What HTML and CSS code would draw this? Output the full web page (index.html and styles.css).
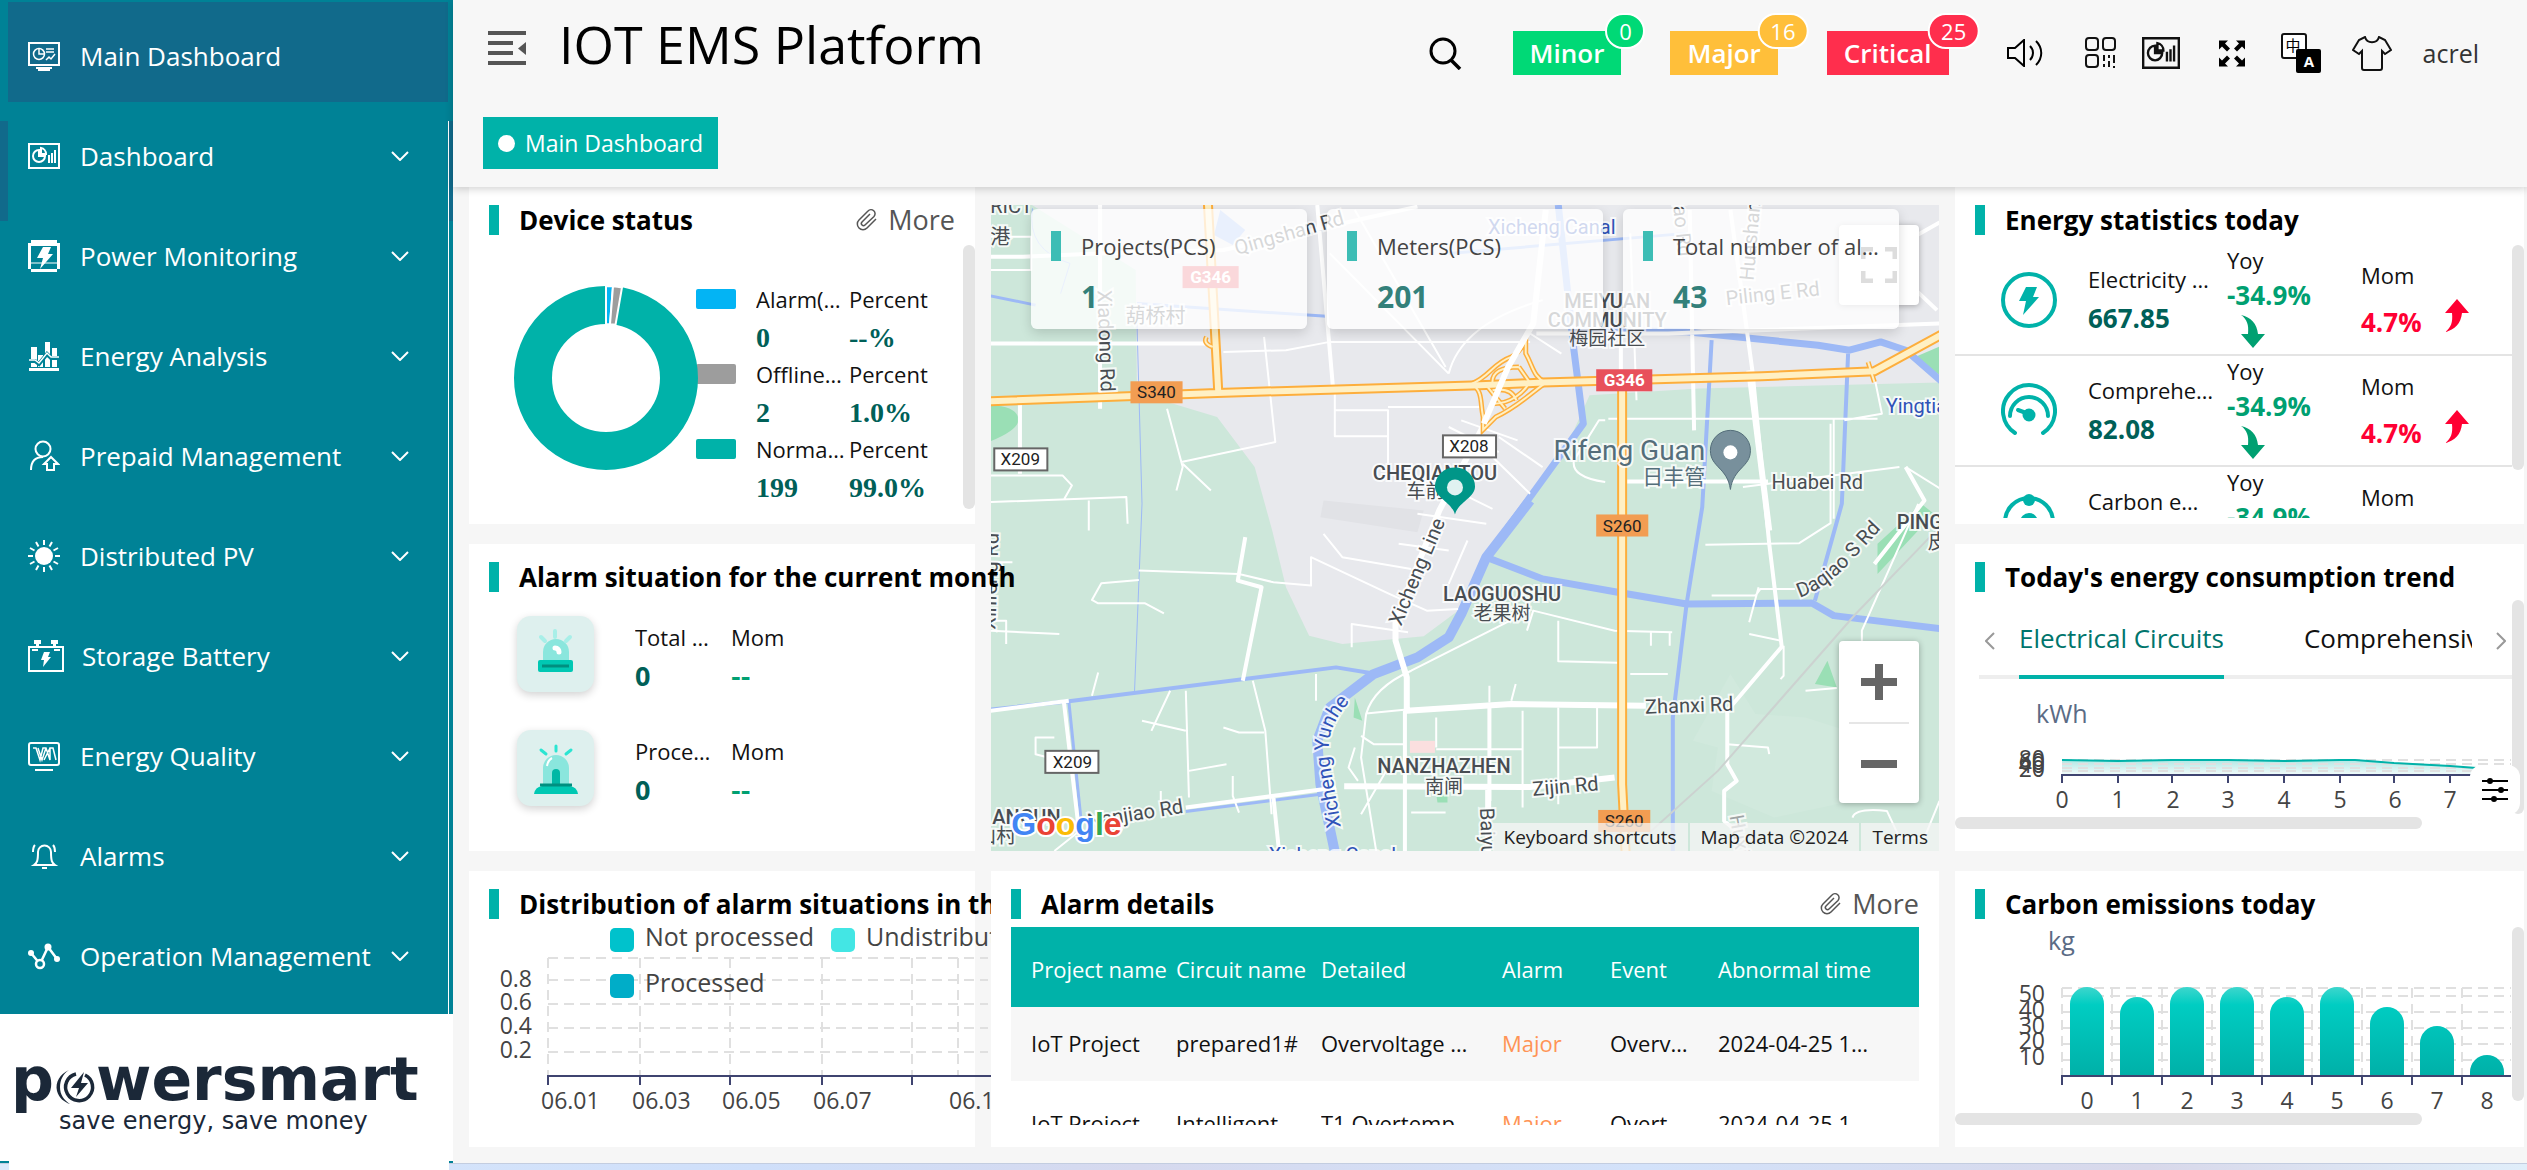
FILE: index.html
```html
<!DOCTYPE html>
<html lang="en">
<head>
<meta charset="utf-8">
<title>IOT EMS Platform</title>
<link rel="stylesheet" href="styles.css">
</head>
<body>
<svg class="defs" aria-hidden="true">
  <defs>
    <symbol id="chev" viewBox="0 0 18 10"><path d="M1 1l8 8 8-8" fill="none" stroke="currentColor" stroke-width="2"/></symbol>
    <symbol id="board" viewBox="0 0 32 26"><path d="M1 1h30v24H1z" fill="none" stroke="currentColor" stroke-width="2"/><path d="M11 7a6 6 0 1 0 6 6h-6zM13 5v6h5a6 6 0 0 0-5-6zM21 12v8M24 10v10M27 7v13" fill="none" stroke="currentColor" stroke-width="2"/></symbol>
    <symbol id="clip" viewBox="0 0 24 24"><path d="M21 11l-9 9a5.500 5.500 0 0 1-8-8L13 3a3.800 3.800 0 0 1 6 5.500l-9 8.500a2 2 0 0 1-3-3l8-8" fill="none" stroke="currentColor" stroke-width="1.500"/></symbol>
    <symbol id="down" viewBox="0 0 24 33"><path d="M0 0C10 2 16 9 17 19h7L12 33 0 19h7C8 10 6 4 0 0z" fill="currentColor"/></symbol>
    <symbol id="up" viewBox="0 0 24 33"><path d="M0 33C10 31 16 24 17 14h7L12 0 0 14h7C8 23 6 29 0 33z" fill="currentColor"/></symbol>
  </defs>
</svg>
<div class="page">
  <aside class="sidebar">
    <nav class="nav">
      <a class="nav-item active" href="#">
        <svg class="nav-icon" viewBox="0 0 32 32"><path d="M1 3h30v22H1zM8 28h16M10 30h12" fill="none" stroke="currentColor" stroke-width="2"/><circle cx="11" cy="14" r="5.500" fill="none" stroke="currentColor" stroke-width="1.500"/><path d="M11 8v6h5M18 9h8M18 12h8M18 20l3-3 2 2 4-5" fill="none" stroke="currentColor" stroke-width="1.500"/></svg>
        <span>Main Dashboard</span></a>
      <a class="nav-item" href="#"><svg class="nav-icon"><use href="#board" height="26" y="3"/></svg><span>Dashboard</span><svg class="chev"><use href="#chev"/></svg></a>
      <a class="nav-item" href="#">
        <svg class="nav-icon" viewBox="0 0 32 32"><path d="M3 0h26v3h3v26h-3v3H3v-3H0V3h3zM3 6v23h26V6z" fill="currentColor" fill-rule="evenodd"/><path d="M3 23h26" stroke="currentColor"/><path d="M15 7h8l-3 7h5L12 29l3-11H9z" fill="currentColor"/></svg>
        <span>Power Monitoring</span><svg class="chev"><use href="#chev"/></svg></a>
      <a class="nav-item" href="#">
        <svg class="nav-icon" viewBox="0 0 32 32"><path d="M3 7h6v20H3zM10 15h5v12h-5zM17 2h5v25h-5zM24 8h5v19h-5zM1 28h30v3H1z" fill="currentColor"/><path d="M1 21h6l4 3 8-10 4 4h8" fill="none" stroke="#008296" stroke-width="4"/><path d="M1 20h6l4 3 8-10 4 4h8" fill="none" stroke="currentColor" stroke-width="1.500"/></svg>
        <span>Energy Analysis</span><svg class="chev"><use href="#chev"/></svg></a>
      <a class="nav-item" href="#">
        <svg class="nav-icon" viewBox="0 0 32 32"><circle cx="15" cy="9" r="7.500" fill="none" stroke="currentColor" stroke-width="2"/><path d="M3 30c0-8 4-13 12-13M23 17l7 7h-4v6h-7v-6h-3z" fill="none" stroke="currentColor" stroke-width="2"/></svg>
        <span>Prepaid Management</span><svg class="chev"><use href="#chev"/></svg></a>
      <a class="nav-item" href="#">
        <svg class="nav-icon" viewBox="0 0 32 32"><circle cx="16" cy="16" r="9" fill="currentColor"/><path d="M16 0v5M16 27v5M0 16h5M27 16h5M8 2l2.500 4.500M21.500 25.500L24 30M24 2l-2.500 4.500M10.500 25.500L8 30M2 8l4.500 2.500M25.500 21.500L30 24M30 8l-4.500 2.500M6.500 21.500L2 24" stroke="currentColor" stroke-width="2"/></svg>
        <span>Distributed PV</span><svg class="chev"><use href="#chev"/></svg></a>
      <a class="nav-item wide" href="#">
        <svg class="nav-icon" viewBox="0 0 36 32"><path d="M1 7h34v24H1zM4 10h6M26 10h6" fill="none" stroke="currentColor" stroke-width="2"/><path d="M6 0h7v4h-2v3H8V4H6zM23 0h7v4h-2v3h-3V4h-2zM16 12h6l-2 5h3l-8 10 1-7h-3z" fill="currentColor"/></svg>
        <span>Storage Battery</span><svg class="chev"><use href="#chev"/></svg></a>
      <a class="nav-item" href="#">
        <svg class="nav-icon" viewBox="0 0 32 32"><rect x="1" y="3" width="30" height="22" rx="2" fill="none" stroke="currentColor" stroke-width="2"/><path d="M7 30h18" stroke="currentColor" stroke-width="2"/><path d="M5 8h3l4 12 3-12h3l4 12V8h3l3 12M10 8l4 12 4-12M16 20l6-12" fill="none" stroke="currentColor" stroke-width="1.500"/></svg>
        <span>Energy Quality</span><svg class="chev"><use href="#chev"/></svg></a>
      <a class="nav-item" href="#">
        <svg class="nav-icon" viewBox="0 0 32 32"><path d="M6 25c3-2 4-4 4-13a6.500 6.500 0 0 1 13 0c0 9 1 11 4 13z M14 28h5M7 5c-2 2-2 5-2 7M25 5c2 2 2 5 2 7" fill="none" stroke="currentColor" stroke-width="2"/></svg>
        <span>Alarms</span><svg class="chev"><use href="#chev"/></svg></a>
      <a class="nav-item" href="#">
        <svg class="nav-icon" viewBox="0 0 32 32"><path d="M3 13l9 11L20 7l9 12" fill="none" stroke="currentColor" stroke-width="2.500"/><circle cx="3" cy="13" r="3" fill="currentColor"/><circle cx="20" cy="7" r="3.500" fill="currentColor"/><circle cx="29" cy="19" r="3" fill="currentColor"/><circle cx="12" cy="24" r="4" fill="#008296" stroke="currentColor" stroke-width="2.500"/></svg>
        <span>Operation Management</span><svg class="chev"><use href="#chev"/></svg></a>
    </nav>
    <div class="brand">
      <div class="brand-box">
        <div class="brand-name"><span>p</span><svg class="brand-o" viewBox="0 0 40 40"><path d="M30 9A13.500 13.500 0 1 1 21 8" fill="none" stroke="#1b2838" stroke-width="3.500"/><path d="M14 4C5 8 0 16 2 25c2 7 7 11 13 13C9 34 5 29 5 21 5 14 8 8 14 4z" fill="#1b2838"/><path d="M29 6L16 22h8l-3 9 12-14h-7z" fill="#1b2838"/></svg><span>wersmart</span></div>
        <div class="brand-tag">save energy, save money</div>
      </div>
    </div>
  </aside>

  <main class="main">
    <header class="header">
      <div class="topbar">
        <button class="plain" aria-label="Collapse menu"><svg width="38" height="34" viewBox="0 0 38 34"><path d="M0 2h38M0 12h25M0 22h25M0 32h38" stroke="#555" stroke-width="4"/><path d="M38 11v13l-8-6.500z" fill="#555"/></svg></button>
        <h1>IOT EMS Platform</h1>
        <div class="tools">
          <button class="plain" aria-label="Search"><svg width="33" height="33" viewBox="0 0 33 33"><circle cx="14" cy="14" r="12" fill="none" stroke="#000" stroke-width="3"/><path d="M22 23l9 9" stroke="#000" stroke-width="3.500"/></svg></button>
          <button class="level minor">Minor<span class="badge">0</span></button>
          <button class="level major">Major<span class="badge">16</span></button>
          <button class="level critical">Critical<span class="badge">25</span></button>
          <button class="plain" aria-label="Sound"><svg width="37" height="28" viewBox="0 0 37 28"><path d="M1 9h7l9-8v26l-9-8H1zM23 7c4 4 4 10 0 14M29 2c7 7 7 17 0 24" fill="none" stroke="#000" stroke-width="2"/></svg></button>
          <button class="plain code" aria-label="Code"><svg width="32" height="32" viewBox="0 0 32 32"><g fill="none" stroke="#111" stroke-width="2"><rect x="1" y="1" width="12" height="12" rx="3"/><rect x="18" y="1" width="12" height="12" rx="3"/><rect x="1" y="18" width="12" height="12" rx="3"/><path d="M19 18v6M19 27v3M24 18v3M24 24v6M29 18v8M29 29v2"/></g></svg></button>
          <button class="plain" aria-label="Board"><svg width="38" height="32" viewBox="0 0 32 26" preserveAspectRatio="none"><use href="#board"/></svg></button>
          <button class="plain screen" aria-label="Full screen"><svg width="26" height="27" viewBox="0 0 26 26"><path d="M0 0h9L6 3l5 5-3 3-5-5-3 3zM26 0v9l-3-3-5 5-3-3 5-5-3-3zM0 26v-9l3 3 5-5 3 3-5 5 3 3zM26 26h-9l3-3-5-5 3-3 5 5 3-3z"/></svg></button>
          <button class="plain lang" aria-label="Language"><svg width="40" height="40" viewBox="0 0 40 40"><rect x="1" y="1" width="24" height="24" rx="2" fill="#fff" stroke="#111" stroke-width="2"/><rect x="15" y="16" width="25" height="24" rx="2"/><text x="12" y="18" font-size="15" text-anchor="middle" class="cjk">中</text><text x="28" y="34" font-size="15" font-weight="700" fill="#fff" text-anchor="middle">A</text></svg></button>
          <button class="plain" aria-label="Theme"><svg width="40" height="35" viewBox="0 0 40 35"><path d="M13 1c2 7 12 7 14 0l6 3 6 10-6 4-3-3v17c0 1-1 2-2 2H12c-1 0-2-1-2-2V15l-3 3-6-4L7 4z" fill="none" stroke="#111" stroke-width="2"/></svg></button>
          <a class="user" href="#">acrel</a>
        </div>
      </div>
      <a class="tag" href="#"><i></i>Main Dashboard</a>
    </header>

    <div class="board">
      <section class="map-card">
        <svg class="map" viewBox="0 0 948 645" preserveAspectRatio="xMidYMid slice">
          <defs>
            <path id="yunhe" d="M350 621C346 590 338 560 338 542C338 520 350 505 372 480"/>
            <path id="daqiao" d="M808 392C845 380 862 350 895 318"/>
            <g id="hwy">
              <path d="M0 634L380 608 800 585 900 577 1250 558 1430 543 1560 410M365 30L382 610M1027 590V1780L1033 2000"/>
            </g>
            <g id="ramp"><path d="M787 580C815 560 820 520 850 500C868 480 873 450 873 435V490C885 530 885 560 905 577M787 583C805 600 800 640 805 680V718L825 680C860 650 880 610 905 577M820 580C818 545 835 530 862 530M862 530L880 578M878 580C870 605 850 640 822 640M812 590L840 655M820 600Q850 590 858 630M363 440q-6 20 10 30M1420 515l10 60"/></g>
          </defs>
          <rect width="948" height="645" fill="#cde7da"/>
          <g transform="matrix(.625 0 0 .333333 -11 -15)">
            <path class="urban" d="M80 40L250 240 252 620 310 640 380 680 440 830 468 1020 490 1190 527 1335 580 1360 710 1337 765 1260 870 950 905 850 950 720 975 615 1150 595 1560 575V40z"/>
            <path class="block" d="M550 930l160 30-10 65-155-45z"/>
            <path class="park" d="M0 645Q55 640 62 680T0 765zM1495 500l50-40v110zM1435 1150V1060l70-120 20 30zM1335 1480l20-70 15 80zM600 1520l12 70-14-10zM730 1810h18v25h-16z"/>
            <path d="M1200 1450l-60 200 40 20-10 130 100 80 150-60 40-200-40 20-100-60-80-10z" fill="#d1e9dd"/>
            <path d="M688 1650h40v36h-40z" fill="#fbdfdf"/>
            <g class="water">
              <path class="w1" d="M85 55Q75 180 145 220L130 310M252 400L260 940 248 1505"/>
              <path class="w2" d="M0 310L90 345M252 340L420 362 555 378M330 1862L545 1810M143 1530L165 1930M750 190L1130 130"/>
              <path class="w4" d="M1170 450L1155 950 1130 1240 1108 1580V2000M1388 490L1378 940 1335 1230M0 1560L140 1532 570 1430 635 1450"/>
              <path class="w6" d="M925 45L950 480 965 700 845 1010M945 420L1130 425 1340 465 1390 480 1440 455 1480 480 1560 610M810 1100L900 1165 1020 1205 1130 1240 1330 1237 1365 1275 1560 1320"/>
              <path class="w9" d="M880 930L810 1100 770 1270 750 1340 700 1400 630 1450 560 1550 540 1650 545 1780 570 2000"/>
              <path d="M385 60l40 60-20 45-30-30z" fill="#9db9f6" stroke="none"/>
            </g>
            <g class="road">
              <path class="r2" d="M18 140h65V240H18M390 485l100-5 70-25h320M455 440l18 315-150 60M300 655l25 175-10 70M325 820l45 80M568 660h85V820M568 590v148h85M653 650h150M18 855h115l15 30-12 40M18 935l217-15 2 80M175 930v90M560 190L750 550M600 60L745 530M750 550Q770 400 900 330M880 430l50 60M1000 690h-10l-40 120Q945 860 1000 875M770 690l90 60M750 710l80 75M830 740l70 90M820 800l60 110M760 900l60 55M700 970l110 30M1005 685h430M1365 685v300M1430 560l12 110-60 20M1160 1063l150-5 50-60V700M1040 130l10 500M1470 830l-250 60M1480 830l60 70M1500 940L1410 1320v80"/>
              <path class="r2" d="M255 1140l160 10 55 25 60 10V1100L655 1210l60 50 50-5M550 1030l30 70 110 35M780 1050l-30 130M670 1060l80 20M255 1168l-60 10-15 50 10 10h75l30 30M595 1370V1300l90 25M880 1260L690 1440Q630 1490 618 1570L610 1700 635 1990M875 1320l10-60 130 60 92 5M925 1290v122l95 4M1073 1325v40M1103 1325v40M1040 1450h60M330 1500l5 320M330 1620l-70-30M437 1470l20 150 10 250M455 1625h-40l-25-15M190 1445l-10 70M538 1450v80M305 1500l-30 120M120 1640h-30v50l20 10M335 1740l60-20M405 1755v60l10 50M290 1800v60M618 1568l65-12M730 1580v90M730 1675h138M868 1560v290M925 1550v290M925 1670h62V1550M610 1635l20 25h50M600 1670l-10 60 15 40M650 1740l-40 130M690 1865h55M815 1485v50M857 1480l-7 50M1170 1215h70l8-20h55M1245 1190l-15 105M1285 1365v90l-5 10M1230 1330l50 20M1320 1500l50-8M1195 1660l65 10 2 20M1395 1880Q1400 1850 1450 1860l20 80h40l24-110M18 1320l110 10M18 1290h25v70M18 1115h35M120 1980l40-60"/>
              <path class="r4" d="M193 40V655M65 630V850M18 460h345M18 200L70 200 190 190 390 180 700 50M540 45L565 590M1135 60L1142 720M1025 440V590M1200 60L1235 540 1262 1060 1282 1368 1195 1560V1720l15 50-20 30V1890l20 30M1035 873h225M1390 250l170-180M1400 130l130 230M1534 400L1100 430 890 430M425 1040l-12 130 38 20-30 280M18 1560l125-30M1430 1120L1510 930 1480 830M135 1530L160 1930M330 1850L570 1790M470 1820l10 180M815 1545V1830M680 1560V2000"/>
              <path class="r6" d="M810 690L735 960 665 1290V1350L683 1460V1560L850 1540 1065 1545M583 1786L880 1788 1015 1760M813 1790V1990M1230 540L1262 1020"/>
            </g>
            <path d="M1534 1010L1400 1270 1180 1740 1050 1960" fill="none" stroke="#ccd2d0" stroke-width="2"/>
            <use href="#ramp" class="case-s"/><use href="#hwy" class="case"/><use href="#ramp" class="fill-s"/><use href="#hwy" class="fill"/>
            <path d="M905 60L885 400 845 530 806 700" fill="none" stroke="#fff" stroke-width="6"/>
          </g>
          <g class="lbl">
            <text x="-12" y="8">TRICT</text><text x="0" y="39">港</text>
            <text transform="translate(246 50) rotate(-16)">Qingshan Rd</text>
            <text class="blue" x="497" y="29">Xicheng Canal</text>
            <text transform="translate(680 -16) rotate(84)">Xiao Rd</text>
            <text transform="translate(762 76) rotate(-85)">Huashan Rd</text>
            <text transform="translate(107 85) rotate(88)">Xiadong Rd</text>
            <text x="135" y="118">葫桥村</text>
            <g class="caps"><text x="616" y="103">MEIYUAN</text><text x="616" y="122">COMMUNITY</text></g><text class="mid" x="616" y="140">梅园社区</text>
            <text transform="translate(735 100) rotate(-6)">Piling E Rd</text>
            <text class="blue" x="894" y="208">Yingtian</text>
            <text class="caps" x="444" y="275">CHEQIANTOU</text><text class="mid" x="444" y="293">车前头</text>
            <text class="poi" x="714" y="255">Rifeng Guan</text><text class="poi small" x="714" y="279">日丰管</text>
            <text x="780" y="284">Huabei Rd</text>
            <text class="caps start" x="905" y="323">PINGXIN</text><text x="936" y="343">皮</text>
            <text transform="translate(410 421) rotate(-67)">Xicheng Line</text>
            <text class="caps" x="511" y="395">LAOGUOSHU</text><text class="mid" x="511" y="414">老果树</text>
            <text><textPath href="#daqiao">Daqiao S Rd</textPath></text>
            <text transform="translate(654 508) rotate(-2)">Zhanxi Rd</text>
            <text class="blue"><textPath href="#yunhe">Xicheng Yunhe</textPath></text>
            <text class="caps" x="453" y="567">NANZHAZHEN</text><text class="mid" x="453" y="587">南闸</text>
            <text transform="translate(542 590) rotate(-5)">Zijin Rd</text>
            <text transform="translate(98 622) rotate(-9)">Nanjiao Rd</text>
            <text transform="translate(489 602) rotate(88)">Baiyun Rd</text>
            <text class="caps start" x="2" y="618">ANGUN</text><text x="-14" y="637">山村</text>
            <text transform="translate(5 424) rotate(-88)">Xinfeng Rd</text>
            <text class="blue" x="278" y="656">Xicheng Canal</text>
            <text transform="translate(738 610) rotate(80)" fill-opacity=".5">Huxi Rd</text>
          </g>
          <g class="shield">
            <rect x="192" y="61" width="56" height="22" fill="#e8505b"/><text x="220" y="78" fill="#fff">G346</text>
            <rect x="605" y="164" width="56" height="22" fill="#e8505b"/><text x="633" y="181" fill="#fff">G346</text>
            <rect x="140" y="176" width="52" height="22" fill="#f29d52"/><text x="166" y="193">S340</text>
            <rect x="605" y="309" width="52" height="22" fill="#f29d52"/><text x="631" y="326">S260</text>
            <rect x="607" y="604" width="52" height="22" fill="#f29d52"/><text x="633" y="621">S260</text>
            <g fill="#fff" stroke="#666" stroke-width="2"><rect x="452" y="230" width="53" height="22"/><rect x="4" y="243" width="53" height="22"/><rect x="55" y="545" width="53" height="22"/></g>
            <text x="478" y="247">X208</text><text x="30" y="260">X209</text><text x="82" y="562">X209</text>
          </g>
          <path d="M739 284C736 262 719 262 719 245a20 20 0 0 1 40 0c0 17-17 17-20 39z" fill="#78909c" stroke="#546e7a"/><circle cx="739" cy="247" r="7" fill="#fff"/>
          <path d="M464 309C461 297 444 292 444 281a20 19 0 0 1 40 0c0 11-17 16-20 28z" fill="#009688"/><circle cx="464" cy="282" r="8" fill="#e0f2f1"/>
          <text class="google" x="21" y="629"><tspan fill="#4285f4">G</tspan><tspan fill="#ea4335">o</tspan><tspan fill="#fbbc05">o</tspan><tspan fill="#4285f4">g</tspan><tspan fill="#34a853">l</tspan><tspan fill="#ea4335">e</tspan></text>
        </svg>
        <button class="map-full" aria-label="Toggle fullscreen view"><svg width="36" height="36" viewBox="0 0 36 36"><path d="M2 12V2h10M24 2h10v10M34 24v10H24M12 34H2V24" fill="none" stroke="#666" stroke-width="5"/></svg></button>
        <div class="map-zoom">
          <button aria-label="Zoom in"><svg width="36" height="36"><path d="M18 0v36M0 18h36" stroke="#666" stroke-width="8"/></svg></button>
          <button aria-label="Zoom out"><svg width="36" height="36"><path d="M0 18h36" stroke="#666" stroke-width="8"/></svg></button>
        </div>
        <div class="kpis">
          <div class="kpi"><span>Projects(PCS)</span><strong>1</strong></div>
          <div class="kpi"><span>Meters(PCS)</span><strong>201</strong></div>
          <div class="kpi"><span>Total number of alarms</span><strong>43</strong></div>
        </div>
        <div class="credits"><button>Keyboard shortcuts</button><span>Map data ©2024</span><a href="#">Terms</a></div>
      </section>

      <section class="card device">
        <div class="card-head"><h2>Device status</h2><a class="more" href="#"><svg width="24" height="24"><use href="#clip"/></svg>More</a></div>
        <div class="device-body">
          <svg class="donut" viewBox="-93 -93 186 186" width="186" height="186">
            <circle r="73" fill="none" stroke="#00b2a9" stroke-width="38"/>
            <path d="M0 -92A92 92 0 0 1 7 -91.700L4 -53.800A54 54 0 0 0 0 -54z" fill="#03b4f4" stroke="#fff" stroke-width="2"/>
            <path d="M7 -91.700A92 92 0 0 1 16 -90.600L9.500 -53.200A54 54 0 0 0 4 -53.800z" fill="#9d9d9d" stroke="#fff" stroke-width="2"/>
          </svg>
          <ul class="legend">
            <li><i class="blue"></i><div><span>Alarm(PCS)</span><b>0</b></div><div><span>Percent</span><b>--%</b></div></li>
            <li><i class="gray"></i><div><span>Offline(PCS)</span><b>2</b></div><div><span>Percent</span><b>1.0%</b></div></li>
            <li><i class="teal"></i><div><span>Normal(PCS)</span><b>199</b></div><div><span>Percent</span><b>99.0%</b></div></li>
          </ul>
        </div>
        <div class="thumb-v"></div>
      </section>

      <section class="card energy">
        <div class="card-head"><h2>Energy statistics today</h2></div>
        <div class="stats">
          <div class="stat">
            <svg width="56" height="56" viewBox="0 0 56 56"><circle cx="28" cy="28" r="26" fill="none" stroke="#00b2a9" stroke-width="4"/><path d="M25 15h11l-4 10h6L22 43l3-14h-7z" fill="#00b2a9"/></svg>
            <div class="s-name"><span>Electricity consumption</span><b>667.85</b></div>
            <div class="s-yoy"><span>Yoy</span><b>-34.9%</b><svg width="24" height="33"><use href="#down"/></svg></div>
            <div class="s-mom"><span>Mom</span><b>4.7%</b></div><svg class="s-up" width="24" height="33"><use href="#up"/></svg>
          </div>
          <div class="stat">
            <svg width="56" height="56" viewBox="0 0 56 56"><path d="M14 50A26 26 0 1 1 42 50M9 33a19 19 0 1 1 38 0" fill="none" stroke="#00b2a9" stroke-width="4" stroke-linecap="round"/><circle cx="28" cy="32" r="6.500" fill="#00b2a9"/><path d="M17 27l11 4" stroke="#00b2a9" stroke-width="4" stroke-linecap="round"/></svg>
            <div class="s-name"><span>Comprehensive energy</span><b>82.08</b></div>
            <div class="s-yoy"><span>Yoy</span><b>-34.9%</b><svg width="24" height="33"><use href="#down"/></svg></div>
            <div class="s-mom"><span>Mom</span><b>4.7%</b></div><svg class="s-up" width="24" height="33"><use href="#up"/></svg>
          </div>
          <div class="stat">
            <svg width="56" height="56" viewBox="0 0 56 56"><circle cx="28" cy="28" r="24" fill="none" stroke="#00b2a9" stroke-width="4"/><circle cx="28" cy="6" r="6" fill="#00b2a9"/><circle cx="28" cy="28" r="9" fill="#00b2a9"/></svg>
            <div class="s-name"><span>Carbon emissions</span><b>53.2</b></div>
            <div class="s-yoy"><span>Yoy</span><b>-34.9%</b><svg width="24" height="33"><use href="#down"/></svg></div>
            <div class="s-mom"><span>Mom</span><b>4.7%</b></div><svg class="s-up" width="24" height="33"><use href="#up"/></svg>
          </div>
        </div>
        <div class="thumb-v"></div>
      </section>

      <section class="card alarm">
        <div class="card-head"><h2>Alarm situation for the current month</h2></div>
        <div class="alarm-row">
          <svg class="tile" viewBox="0 0 77 76"><path d="M26 45V36a13 13 0 0 1 26 0v9z" fill="#8ae6dd"/><path d="M38 15v6M24 21l4 4M53 21l-4 4" stroke="#a8efe8" stroke-width="4" stroke-linecap="round"/><path d="M38 32c3 0 4 2 4 4" stroke="#fff" stroke-width="5" stroke-linecap="round" fill="none"/><rect x="21" y="44" width="35" height="12" rx="2" fill="#00c8b3"/><path d="M25 50h27" stroke="#008f80" stroke-width="3"/></svg>
          <div><span>Total alarms</span><b>0</b></div><div><span>Mom</span><em>--</em></div>
        </div>
        <div class="alarm-row">
          <svg class="tile" viewBox="0 0 77 76"><path d="M26 54V38a13 13 0 0 1 26 0v16z" fill="#8ae6dd"/><path d="M39 16v5M24 20l5 4M54 20l-5 4" stroke="#2be5d2" stroke-width="3" stroke-linecap="round"/><path d="M30 36q1-6 5-8" stroke="#fff" stroke-width="2" fill="none"/><path d="M35 54V43a4 4 0 0 1 8 0v11z" fill="#00b8a5"/><path d="M17 64q1-7 8-8h28q7 1 8 8z" fill="#00c8b3"/><path d="M23 55h32" stroke="#008f80" stroke-width="3"/></svg>
          <div><span>Processed</span><b>0</b></div><div><span>Mom</span><em>--</em></div>
        </div>
      </section>

      <section class="card trend">
        <div class="card-head"><h2>Today's energy consumption trend</h2></div>
        <div class="tabs" role="tablist">
          <button class="arrow" aria-label="Previous"><svg width="10" height="18"><path d="M9 1L1 9l8 8" fill="none" stroke="#999" stroke-width="2"/></svg></button>
          <div class="tab-strip"><button class="tab on" role="tab">Electrical Circuits</button><button class="tab" role="tab">Comprehensive</button></div>
          <button class="arrow" aria-label="Next"><svg width="10" height="18"><path d="M1 1l8 8-8 8" fill="none" stroke="#999" stroke-width="2"/></svg></button>
        </div>
        <svg class="chart" width="556" height="138" viewBox="1955 679 556 138">
          <defs><linearGradient id="area" x1="0" y1="0" x2="0" y2="1"><stop offset="0" stop-color="#00b2a9" stop-opacity=".3"/><stop offset="1" stop-color="#00b2a9" stop-opacity=".05"/></linearGradient></defs>
          <text class="unit" x="2036" y="723">kWh</text>
          <path d="M2062 760L2118 761 2172 760H2228L2284 761 2340 760H2355L2394 763 2450 766 2490 769V775H2062z" fill="url(#area)"/>
          <path class="grid" d="M2062 760h449M2062 764h449M2062 768h449M2062 771h449"/>
          <path d="M2062 760L2118 761 2172 760H2228L2284 761 2340 760H2355L2394 763 2450 766 2490 769" fill="none" stroke="#00b2a9" stroke-width="2"/>
          <path class="axis" d="M2061 775h420M2062 775v8M2118 775v8M2172 775v8M2228 775v8M2284 775v8M2340 775v8M2394 775v8M2450 775v8"/>
          <g class="ylab"><text x="2045" y="767">80</text><text x="2045" y="770">60</text><text x="2045" y="773">40</text><text x="2045" y="777">20</text></g>
          <g class="xlab"><text x="2062" y="808">0</text><text x="2118" y="808">1</text><text x="2173" y="808">2</text><text x="2228" y="808">3</text><text x="2284" y="808">4</text><text x="2340" y="808">5</text><text x="2395" y="808">6</text><text x="2450" y="808">7</text></g>
        </svg>
        <div class="thumb-v"></div><div class="thumb-h"></div>
        <button class="filter" aria-label="Settings"><svg width="26" height="24"><path d="M0 3h26M0 12h26M0 21h26" stroke="#000" stroke-width="2"/><circle cx="8" cy="3" r="3"/><circle cx="19" cy="12" r="3"/><circle cx="12" cy="21" r="3"/></svg></button>
      </section>

      <section class="card spread">
        <div class="spill">
          <div class="card-head"><h2>Distribution of alarm situations in the current month</h2></div>
          <svg class="chart" width="522" height="220" viewBox="469 919 522 220">
            <path class="grid" d="M548 958h440M548 980h440M548 1004h440M548 1028h440M548 1052h440M548 958v118M640 958v118M730 958v118M822 958v118M912 958v118M958 958v118"/>
            <path class="axis" d="M547 1076h444M548 1076v9M640 1076v9M730 1076v9M822 1076v9M912 1076v9"/>
            <rect x="610" y="928" width="24" height="24" rx="5" fill="#00c2cc"/><rect x="831" y="928" width="24" height="24" rx="5" fill="#43e6e4"/><rect x="610" y="974" width="24" height="24" rx="5" fill="#00adc8"/>
            <g class="key"><text x="645" y="946">Not processed</text><text x="866" y="946">Undistributed</text><text x="645" y="992">Processed</text></g>
            <g class="ylab"><text x="532" y="987">0.8</text><text x="532" y="1010">0.6</text><text x="532" y="1034">0.4</text><text x="532" y="1058">0.2</text></g>
            <g><text x="541" y="1109">06.01</text><text x="632" y="1109">06.03</text><text x="722" y="1109">06.05</text><text x="813" y="1109">06.07</text><text x="949" y="1109">06.10</text></g>
          </svg>
        </div>
      </section>

      <section class="card details">
        <div class="card-head"><h2>Alarm details</h2><a class="more" href="#"><svg width="24" height="24"><use href="#clip"/></svg>More</a></div>
        <div class="table-wrap">
          <table>
            <colgroup><col class="c-project"><col class="c-circuit"><col class="c-detail"><col class="c-level"><col class="c-event"><col></colgroup>
            <thead><tr><th>Project name</th><th>Circuit name</th><th>Detailed</th><th>Alarm</th><th>Event</th><th>Abnormal time</th></tr></thead>
            <tbody>
              <tr><td>IoT Project</td><td>prepared1#</td><td>Overvoltage alarm</td><td class="warn">Major</td><td>Overvoltage</td><td>2024-04-25 15:30</td></tr>
              <tr><td>IoT Project</td><td>Intelligent</td><td>T1 Overtemp</td><td class="warn">Major</td><td>Overt</td><td>2024-04-25 1</td></tr>
            </tbody>
          </table>
        </div>
      </section>

      <section class="card carbon">
        <div class="card-head"><h2>Carbon emissions today</h2></div>
        <svg class="chart" width="556" height="194" viewBox="1955 919 556 194">
          <defs><linearGradient id="bar" gradientUnits="userSpaceOnUse" x1="0" y1="987" x2="0" y2="1076"><stop offset="0" stop-color="#3dd6cd"/><stop offset=".2" stop-color="#00cdc2"/><stop offset="1" stop-color="#00b0a8"/></linearGradient></defs>
          <text class="unit" x="2048" y="950">kg</text>
          <path class="grid" d="M2062 988h449M2062 996h449M2062 1012h449M2062 1028h449M2062 1044h449M2062 1060h449M2062 988v88M2112 988v88M2162 988v88M2212 988v88M2262 988v88M2312 988v88M2362 988v88M2412 988v88M2462 988v88"/>
          <g fill="url(#bar)"><path d="M2070 1076v-72a17 17 0 0 1 34 0v72zM2120 1076v-62a17 17 0 0 1 34 0v62zM2170 1076v-72a17 17 0 0 1 34 0v72zM2220 1076v-72a17 17 0 0 1 34 0v72zM2270 1076v-62a17 17 0 0 1 34 0v62zM2320 1076v-72a17 17 0 0 1 34 0v72zM2370 1076v-52a17 17 0 0 1 34 0v52zM2420 1076v-33a17 17 0 0 1 34 0v33zM2470 1076v-4a17 17 0 0 1 34 0v4z"/></g>
          <path class="axis" d="M2061 1076h450M2062 1076v9M2112 1076v9M2162 1076v9M2212 1076v9M2262 1076v9M2312 1076v9M2362 1076v9M2412 1076v9M2462 1076v9"/>
          <g class="ylab"><text x="2045" y="1002">50</text><text x="2045" y="1018">40</text><text x="2045" y="1034">30</text><text x="2045" y="1049">20</text><text x="2045" y="1065">10</text></g>
          <g class="xlab"><text x="2087" y="1109">0</text><text x="2137" y="1109">1</text><text x="2187" y="1109">2</text><text x="2237" y="1109">3</text><text x="2287" y="1109">4</text><text x="2337" y="1109">5</text><text x="2387" y="1109">6</text><text x="2437" y="1109">7</text><text x="2487" y="1109">8</text></g>
        </svg>
        <div class="thumb-v"></div><div class="thumb-h"></div>
      </section>
    </div>
  </main>
  <footer class="edge"></footer>
</div>
</body>
</html>
```
FILE: styles.css
```css
* { box-sizing: border-box; }
body { margin: 0; font-family: "Open Sans", "Noto Sans CJK SC", sans-serif; font-size: 23px; color: #111; background: #f6f6f6; }
h1, h2, ul { margin: 0; padding: 0; }
ul { list-style: none; }
a { color: inherit; text-decoration: none; }
button { font: inherit; color: inherit; background: none; border: 0; padding: 0; cursor: pointer; }
svg { display: block; flex: none; }
.defs { position: absolute; width: 0; height: 0; }
.cjk { font-family: "Noto Sans CJK SC", sans-serif; }

.page { display: grid; grid-template-columns: 453px minmax(0, 1fr); grid-template-rows: 1fr 7px; min-height: 100vh; }

/* sidebar */
.sidebar { display: flex; flex-direction: column; }
.nav {
  padding: 2px 5px 12px 8px; color: #fff; font-size: 26px;
  background:
    linear-gradient(#fff, #fff) 448px 121px / 1px 100% no-repeat,
    linear-gradient(#116a8b, #116a8b) 0 121px / 8px 100px no-repeat,
    linear-gradient(#116a8b, #116a8b) 449px 121px / 4px 100px no-repeat,
    #008296;
}
.nav-item { display: flex; align-items: center; height: 100px; padding: 8px 39px 0 20px; white-space: nowrap; }
.nav-item.active { background: #116a8b; }
.nav-item span { flex: 1; margin-left: 20px; }
.nav-icon { width: 32px; height: 32px; }
.wide .nav-icon { width: 36px; }
.wide span { margin-left: 18px; }
.chev { width: 18px; height: 10px; }
.brand { flex: 1; background: #fff; border-bottom: 2px solid #008296; }
.brand-box { position: relative; height: calc(100% + 9px); margin: 0 4px -9px 9px; padding: 34px 0 0 2px; background: #fff; color: #1b2838; font-family: "DejaVu Sans", sans-serif; }
.brand-name { display: flex; align-items: center; font-size: 60px; line-height: 62px; font-weight: 700; }
.brand-o { width: 42px; height: 40px; margin-top: 14px; }
.brand-tag { font-size: 24px; line-height: 22px; padding-left: 48px; white-space: nowrap; }

/* header */
.main { display: flex; flex-direction: column; min-width: 0; }
.header { position: relative; z-index: 3; height: 187px; padding: 14px 48px 0 30px; background: #f7f7f7; box-shadow: 0 2px 8px rgba(0, 0, 0, .18); }
.topbar { display: flex; height: 68px; padding-left: 5px; }
.topbar > .plain { align-self: center; }
h1 { margin: -4px 0 0 33px; font-size: 52px; line-height: 68px; font-weight: 400; color: #000; white-space: nowrap; }
.tools { display: flex; align-items: center; margin-left: auto; height: 78px; }
.plain.code { margin: 0 25px 0 41px; }
.plain.screen { margin: 0 36px 0 39px; }
.plain.lang { margin-right: 31px; }
.level { position: relative; height: 44px; padding: 0 17px; color: #fff; font-weight: 600; font-size: 26px; line-height: 44px; margin-right: 49px; }
.tools > .plain:first-child { margin-right: 51px; }
.level.critical { margin-right: 58px; }
.minor, .minor .badge { background: #00d976; }
.major, .major .badge { background: #ffbf3a; }
.critical, .critical .badge { background: #ff2e4d; }
.badge { position: absolute; right: 0; top: -18px; transform: translateX(60%); min-width: 40px; height: 36px; padding: 0 11px; border: 2px solid #fff; border-radius: 18px; font-size: 22px; line-height: 32px; font-weight: 400; text-align: center; }
.user { margin-left: 31px; font-size: 25px; color: #333; }
.tag { display: inline-flex; align-items: center; gap: 10px; height: 52px; margin-top: 35px; padding: 0 15px; background: #00b2a9; color: #fff; font-size: 23px; }
.tag i { width: 17px; height: 17px; border-radius: 50%; background: #fff; }

/* board */
.board { display: grid; grid-template-columns: 506fr 948fr 569fr; grid-template-rows: 337px 307px 276px; gap: 20px 16px; padding: 0 3px 16px 16px; }
.board > * { min-width: 0; }
.card { position: relative; background: #fff; }
.device { grid-area: 1 / 1; } .alarm { grid-area: 2 / 1; z-index: 1; } .spread { grid-area: 3 / 1; }
.energy { grid-area: 1 / 3; } .trend { grid-area: 2 / 3; } .carbon { grid-area: 3 / 3; }
.details { grid-area: 3 / 2; }
.card-head { display: flex; align-items: center; justify-content: space-between; height: 48px; padding: 18px 20px 0; }
.card-head h2 { border-left: 10px solid #00b2a9; padding-left: 20px; font-size: 26px; line-height: 30px; font-weight: 700; color: #000; white-space: nowrap; }
.more { display: flex; align-items: center; gap: 9px; color: #555; font-size: 27px; line-height: 30px; }
.thumb-v { position: absolute; right: 0; top: 58px; width: 12px; height: 264px; border-radius: 6px; background: #e4e4e4; }
.thumb-h { position: absolute; left: 0; bottom: 22px; width: 82%; height: 12px; border-radius: 6px; background: #e4e4e4; }

.device-body { display: flex; padding: 50px 0 0 44px; }
.donut { position: relative; z-index: 1; }
.legend { display: flex; flex-direction: column; margin-left: -3px; }
.legend li { display: grid; grid-template-columns: 60px 93px 90px; height: 75px; }
.legend i { width: 40px; height: 20px; margin-top: 4px; border-radius: 2px; }
.legend .blue { background: #03b4f4; } .legend .gray { background: #9d9d9d; } .legend .teal { background: #00b2a9; }
.legend span, .legend b { display: block; max-width: 91px; overflow: hidden; text-overflow: ellipsis; white-space: nowrap; }
.legend span { font-size: 22px; line-height: 28px; }
.legend b { font: 700 28px/50px "Liberation Serif", serif; color: #006058; }

.alarm-row { display: grid; grid-template-columns: 118px 96px 1fr; padding-left: 48px; height: 114px; }
.card-head + .alarm-row { margin-top: 24px; }
.tile { width: 77px; height: 76px; border-radius: 14px; background: #def0ee; box-shadow: 0 3px 8px rgba(0, 0, 0, .18); }
.alarm-row span, .alarm-row b, .alarm-row em { display: block; max-width: 78px; overflow: hidden; text-overflow: ellipsis; white-space: nowrap; }
.alarm-row span { font-size: 22px; line-height: 42px; }
.alarm-row b { font-size: 27px; line-height: 36px; color: #006058; }
.alarm-row em { font-size: 30px; line-height: 36px; font-style: normal; font-weight: 600; color: #00a071; }

.stats { margin-top: 10px; height: 273px; overflow: hidden; padding-right: 12px; }
.stat { display: grid; grid-template-columns: 87px 139px 134px 84px 24px; height: 111px; padding-left: 46px; border-bottom: 2px solid #e4e4e4; }
.stat > svg { margin-top: 27px; }
.stat > .s-up { margin-top: 54px; color: #ff0033; }
.stat span, .stat b { display: block; white-space: nowrap; font-size: 22px; }
.stat b { font-size: 26px; }
.s-name span { width: 126px; overflow: hidden; text-overflow: ellipsis; line-height: 40px; margin-top: 14px; }
.s-name b { line-height: 38px; color: #006058; }
.s-yoy span { line-height: 30px; } .s-yoy b { line-height: 40px; color: #00a071; } .s-yoy svg { margin-left: 14px; color: #00a071; }
.s-mom span { line-height: 40px; margin-top: 10px; } .s-mom b { line-height: 54px; color: #ff0033; }
.energy .thumb-v { height: 225px; }

.tabs { display: flex; align-items: center; height: 73px; margin: 14px 12px 0 24px; border-bottom: 4px solid #eee; }
.arrow { padding: 0 6px; }
.tab-strip { display: flex; flex: 1; gap: 80px; height: 73px; margin: 0 18px; overflow: hidden; align-self: flex-start; }
.tab { display: flex; align-items: center; flex: none; height: 73px; padding-bottom: 6px; font-size: 26px; font-weight: 500; white-space: nowrap; border-bottom: 4px solid transparent; }
.tab.on { color: #00756c; border-bottom-color: #00b2a9; }
.trend .thumb-v { top: 56px; height: 214px; }
.filter { position: absolute; right: 4px; bottom: 36px; width: 50px; height: 50px; padding-left: 12px; border-radius: 12px; background: #fff; }
.carbon .thumb-v { top: 56px; height: 174px; }

.chart { font-size: 23px; fill: #444; overflow: hidden; }
.chart .grid { fill: none; stroke: #e0e0e0; stroke-width: 2; stroke-dasharray: 10 6; }
.chart .axis { fill: none; stroke: #3f4470; stroke-width: 2; }
.unit { font-size: 25px; fill: #5b6b85; }
.key { font-size: 25px; }
.ylab { text-anchor: end; } .xlab { text-anchor: middle; }
.spill { margin-right: -16px; overflow: hidden; }

.details { z-index: 1; }
.table-wrap { margin: 8px 20px 0; height: 198px; overflow: hidden; }
table { width: 100%; border-collapse: collapse; table-layout: fixed; font-size: 22px; }
.c-project { width: 165px; } .c-circuit { width: 145px; } .c-detail { width: 181px; } .c-level, .c-event { width: 108px; }
th { height: 80px; padding: 4px 0 0; background: #00b2a9; color: #fff; font-weight: 400; text-align: left; white-space: nowrap; }
td { height: 74px; padding: 0 26px 2px 0; white-space: nowrap; overflow: hidden; text-overflow: ellipsis; }
th:first-child, td:first-child { padding-left: 20px; }
td:first-child, td:nth-child(2) { padding-right: 0; }
td:last-child { padding-right: 40px; }
tbody tr:first-child { background: #f7f7f7; }
tbody tr + tr td { height: 86px; }
.warn { color: #ff9455; }

/* map */
.map-card { grid-area: 1 / 2 / 3 / 3; position: relative; margin-top: 18px; overflow: hidden; }
.map { position: absolute; width: 100%; height: 100%; }
.map path { vector-effect: non-scaling-stroke; }
.urban { fill: #e8e9ed; } .block { fill: #e1e2e6; } .park { fill: #9adfb5; }
.water { fill: none; stroke: #9db9f6; stroke-linejoin: round; }
.road { fill: none; stroke: #fff; stroke-linejoin: round; }
.w1 { stroke-width: 1px; } .w2 { stroke-width: 3px; } .w4 { stroke-width: 4px; } .w6 { stroke-width: 7px; } .w9 { stroke-width: 10px; }
.r2 { stroke-width: 2px; } .r4 { stroke-width: 4px; } .r6 { stroke-width: 6px; }
.case, .case-s { fill: none; stroke: #fdae3c; stroke-width: 10px; }
.fill, .fill-s { fill: none; stroke: #fff0c4; stroke-width: 6px; }
.case-s { stroke-width: 5px; } .fill-s { stroke-width: 2px; }
.lbl text { font: 400 20px Roboto, "Noto Sans CJK SC", sans-serif; fill: #484d52; stroke: #fff; stroke-opacity: .8; stroke-width: 4px; paint-order: stroke; }
.lbl .blue { fill: #3053b8; }
.lbl .caps, .lbl .caps text { font-weight: 500; font-size: 20px; text-anchor: middle; }
.lbl .start { text-anchor: start; }
.lbl .mid { text-anchor: middle; font-size: 19px; }
.lbl .poi { text-anchor: end; font-size: 28px; fill: #546e7a; }
.lbl .small { font-size: 21px; }
.shield text { font: 17px Roboto, sans-serif; fill: #222; text-anchor: middle; stroke: none; }
.shield text[fill] { fill: #fff; font-weight: 700; }
.google { font: 700 32px "Liberation Sans", sans-serif; stroke: #fff; stroke-width: 4px; paint-order: stroke; }
.map-full { position: absolute; right: 20px; top: 20px; width: 80px; height: 80px; padding-left: 22px; background: #fff; border-radius: 4px; box-shadow: 0 1px 6px rgba(0, 0, 0, .3); }
.map-zoom { position: absolute; right: 20px; bottom: 48px; width: 80px; background: #fff; border-radius: 4px; box-shadow: 0 1px 6px rgba(0, 0, 0, .3); }
.map-zoom button { display: flex; align-items: center; justify-content: center; width: 60px; height: 81px; margin: 0 10px; }
.map-zoom button + button { border-top: 2px solid #e6e6e6; }
.kpis { position: relative; display: grid; grid-template-columns: repeat(3, minmax(0, 1fr)); gap: 20px; padding: 4px 40px 0; }
.kpi { height: 120px; padding: 22px 20px 0; border-radius: 6px; background: rgba(255, 255, 255, .78); box-shadow: 0 4px 12px rgba(0, 0, 0, .15); color: #444; }
.kpi span, .kpi strong { display: block; padding-left: 20px; }
.kpi span { border-left: 10px solid #3dbdb5; font-size: 22px; line-height: 30px; overflow: hidden; text-overflow: ellipsis; white-space: nowrap; margin-bottom: 16px; }
.kpi strong { padding-left: 30px; font-size: 30px; line-height: 40px; color: #33807a; }
.credits { position: absolute; right: 0; bottom: 0; display: flex; gap: 2px; font-size: 19px; line-height: 28px; color: #222; }
.credits > * { padding: 0 11px; height: 28px; line-height: 28px; background: rgba(245, 245, 245, .75); }

.edge { grid-column: 1 / 3; background: linear-gradient(90deg, #dbe9fb, #cfdffa 30%, #d6d9ee 45%, #d3e2fa 65%, #d8d8ea 85%, #e0eefa); border-top: 1px solid #c3cde0; }
```
